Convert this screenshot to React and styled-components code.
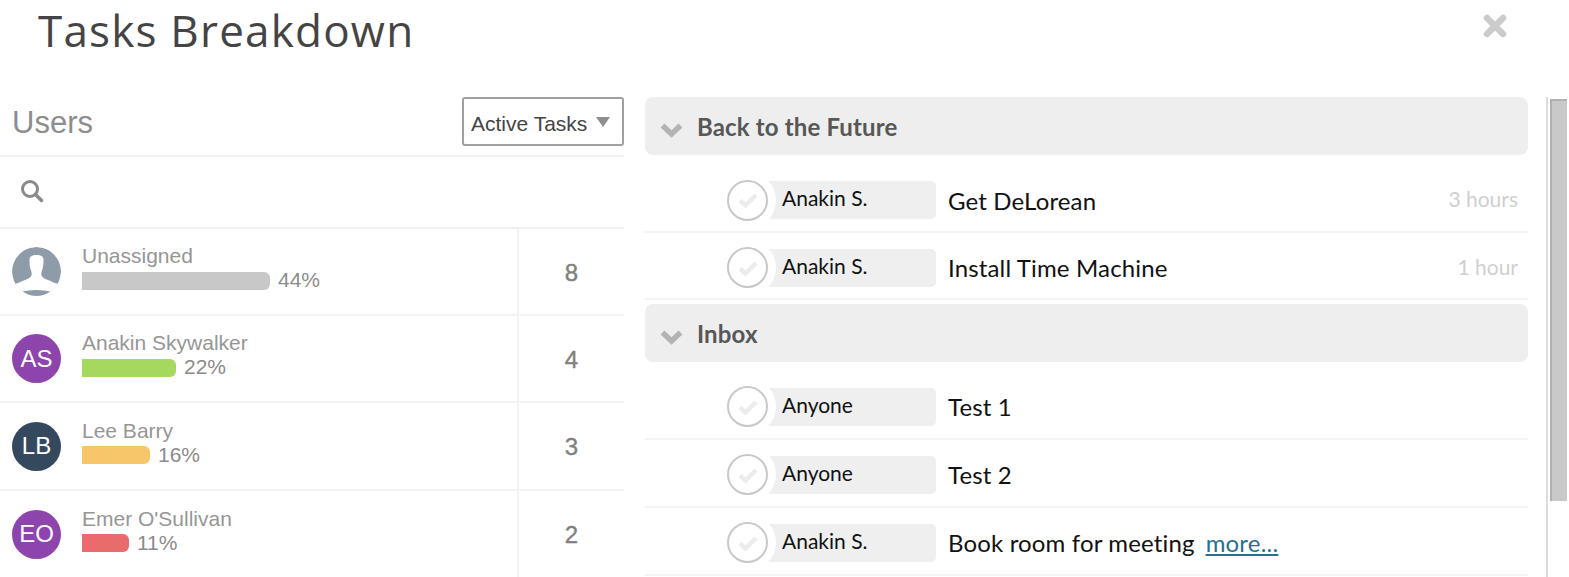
import React from 'react';
import styled, { createGlobalStyle } from 'styled-components';

const GlobalStyle = createGlobalStyle`
  html, body {
    margin: 0;
    padding: 0;
    background: #fff;
    overflow: hidden;
  }
  * { box-sizing: border-box; }
`;

const Page = styled.div`
  width: 1569px;
  height: 577px;
  overflow: hidden;
  display: flex;
  flex-direction: column;
`;

const Header = styled.header`
  height: 97px;
  flex: none;
  display: flex;
  justify-content: space-between;
  align-items: flex-start;
  padding: 0 62px 0 38px;
`;

const Title = styled.h1`
  margin: 0;
  font: 400 44px/60px "Open Sans", sans-serif;
  letter-spacing: 1.2px;
  color: #444;
`;

const Close = styled.svg`
  width: 24px;
  height: 24px;
  margin-top: 14px;
`;

const Body = styled.div`
  flex: 1;
  display: flex;
  min-height: 0;
`;

const Left = styled.section`
  width: 624px;
  flex: none;
`;

const UsersBar = styled.div`
  height: 60px;
  display: flex;
  justify-content: space-between;
  align-items: flex-start;
  padding-left: 12px;
  border-bottom: 2px solid #f1f1f1;
`;

const UsersLabel = styled.h2`
  margin: 0;
  font: 400 31px/52px "Liberation Sans", sans-serif;
  color: #8d8d8d;
`;

const Select = styled.div`
  width: 162px;
  height: 49px;
  border: 2px solid #a0a0a0;
  border-radius: 3px;
  display: flex;
  align-items: center;
  justify-content: space-between;
  padding: 4px 12px 0 7px;
  font: 400 21px "Liberation Sans", sans-serif;
  color: #444;
`;

const Caret = styled.span`
  width: 0;
  height: 0;
  border-left: 7px solid transparent;
  border-right: 7px solid transparent;
  border-top: 10px solid #8f8f8f;
  margin-bottom: 3px;
`;

const SearchRow = styled.div`
  height: 72px;
  display: flex;
  align-items: center;
  padding: 0 0 3px 20px;
  border-bottom: 2px solid #f1f1f1;
`;

const UserRow = styled.div`
  height: ${p => p.$h}px;
  display: flex;
  border-bottom: 2px solid #f3f3f3;
`;

const UserInfo = styled.div`
  width: 519px;
  flex: none;
  display: flex;
  align-items: center;
  gap: 21px;
  padding: 0 0 0 12px;
  border-right: 2px solid #f3f3f3;
`;

const Avatar = styled.div`
  width: 49px;
  height: 49px;
  border-radius: 50%;
  flex: none;
  background: ${p => p.$color};
  color: #fff;
  display: flex;
  align-items: center;
  justify-content: center;
  font: 400 24px "Liberation Sans", sans-serif;
  overflow: hidden;
`;

const UserText = styled.div`
  display: flex;
  flex-direction: column;
  margin-top: -7px;
`;

const UserName = styled.div`
  font: 400 21px/24px "Liberation Sans", sans-serif;
  color: #969696;
`;

const BarLine = styled.div`
  display: flex;
  align-items: center;
  gap: 8px;
  font: 400 21px/24px "Liberation Sans", sans-serif;
  color: #8b8b8b;
`;

const Bar = styled.div`
  height: 18px;
  margin-top: 1px;
  border-radius: 0 6px 6px 0;
  background: ${p => p.$color};
`;

const Count = styled.div`
  flex: 1;
  display: flex;
  align-items: center;
  justify-content: center;
  font: 400 24px "Liberation Sans", sans-serif;
  -webkit-text-stroke: 0.4px #808080;
  color: #808080;
  padding-top: 2px;
`;

const Right = styled.section`
  width: 883px;
  flex: none;
  margin-left: 21px;
`;

const Group = styled.div`
  height: 58px;
  border-radius: 8px;
  background: #eeeeee;
  display: flex;
  align-items: center;
  gap: 14px;
  padding-left: 15px;
  margin-top: ${p => p.$top}px;
  font: 700 24px Lato, sans-serif;
  letter-spacing: 0.15px;
  color: #575757;
`;

const ChevronIcon = styled.svg`
  margin-top: 9px;
`;

const TaskRow = styled.div`
  height: ${p => p.$h}px;
  border-bottom: 2px solid #f3f3f3;
  display: flex;
  align-items: center;
  padding: ${p => p.$pad}px 10px 0 82px;
`;

const Check = styled.div`
  width: 41px;
  height: 41px;
  border-radius: 50%;
  border: 2px solid #c8c8c8;
  background: #fff;
  box-shadow: 0 0 0 8px #fff;
  flex: none;
  display: flex;
  align-items: center;
  justify-content: center;
  position: relative;
  z-index: 1;
`;

const Assignee = styled.div`
  width: 180px;
  height: 38px;
  margin-left: -12px;
  flex: none;
  border-radius: 0 5px 5px 0;
  background: #efefef;
  padding: 0 0 5px 26px;
  display: flex;
  align-items: center;
  font: 400 21px Lato, sans-serif;
  color: #111;
`;

const TaskName = styled.div`
  margin-left: 12px;
  font: 400 24px Lato, sans-serif;
  letter-spacing: 0.15px;
  color: #111;
`;

const More = styled.a`
  margin-left: 11px;
  font: 400 24px Lato, sans-serif;
  letter-spacing: 0.2px;
  color: #2a6f8f;
  text-decoration: underline;
`;

const Estimate = styled.div`
  margin-left: auto;
  padding-bottom: 3px;
  font: 400 21px Lato, sans-serif;
  color: #cfcfcf;
`;

const Scrollbar = styled.div`
  width: 23px;
  flex: none;
  margin-left: 18px;
  display: flex;
  border-left: 2px solid #dcdcdc;
  padding-left: 2px;
`;

const Thumb = styled.div`
  width: 17px;
  height: 402px;
  margin-top: 2px;
  background: #c9c9c9;
  border-top: 2px solid #b0b0b0;
  border-left: 2px solid #b0b0b0;
`;

const users = [
  { name: 'Unassigned', pct: 44, width: 188, color: '#c8c8c8', count: 8, h: 87 },
  { name: 'Anakin Skywalker', initials: 'AS', avatar: '#8e44ad', pct: 22, width: 94, color: '#a6d85f', count: 4, h: 87 },
  { name: 'Lee Barry', initials: 'LB', avatar: '#34495e', pct: 16, width: 68, color: '#f8c66a', count: 3, h: 88 },
  { name: "Emer O'Sullivan", initials: 'EO', avatar: '#8e44ad', pct: 11, width: 47, color: '#ea6b6b', count: 2, h: 88 },
];

const groups = [
  {
    title: 'Back to the Future',
    top: 0,
    tasks: [
      { who: 'Anakin S.', name: 'Get DeLorean', time: '3 hours', h: 78, pad: 14 },
      { who: 'Anakin S.', name: 'Install Time Machine', time: '1 hour', h: 67, pad: 4 },
    ],
  },
  {
    title: 'Inbox',
    top: 4,
    tasks: [
      { who: 'Anyone', name: 'Test 1', h: 78, pad: 13 },
      { who: 'Anyone', name: 'Test 2', h: 68, pad: 3 },
      { who: 'Anakin S.', name: 'Book room for meeting', more: true, h: 68, pad: 3 },
    ],
  },
];

const Silhouette = () => (
  <svg width="49" height="49" viewBox="0 0 49 49">
    <circle cx="24.5" cy="24.5" r="24.5" fill="#8d9ca8" />
    <path
      d="M24.5 8c-4.500 0-7 1.500-7 4.500 0 4 .2 8 1.500 11 1 2.500 1 5-.5 6.500-2 2-7 3.500-10 5-3 1.500-7 2-8 3l6 7.500c5-1.500 12-2.500 18-2.500s13 1 18 2.500l6-7.500c-1-1-5-1.500-8-3-3-1.500-8-3-10-5-1.500-1.500-1.500-4-.5-6.500 1.300-3 1.500-7 1.500-11 0-3-2.500-4.500-7-4.500z"
      fill="#fff"
    />
  </svg>
);

const CheckMark = () => (
  <svg width="22" height="18" viewBox="0 0 22 18">
    <path d="M3 9.500l5.500 5L19 4" fill="none" stroke="#ececec" strokeWidth="4.500" />
  </svg>
);

const Chevron = () => (
  <ChevronIcon width="23" height="15" viewBox="0 0 23 15">
    <path d="M2.500 2.500l9 8.500 9-8.500" fill="none" stroke="#b3b3b3" strokeWidth="5.500" />
  </ChevronIcon>
);

const SearchIcon = () => (
  <svg width="24" height="24" viewBox="0 0 24 24">
    <circle cx="10" cy="10" r="7.500" fill="none" stroke="#8a8a8a" strokeWidth="3" />
    <path d="M15.500 15.500l6 6" stroke="#8a8a8a" strokeWidth="3.500" strokeLinecap="round" />
  </svg>
);

const App = () => (
  <Page>
    <GlobalStyle />
    <Header>
      <Title>Tasks Breakdown</Title>
      <Close viewBox="0 0 24 24">
        <path d="M4 4l16 16M20 4L4 20" stroke="#cbcbcb" strokeWidth="6.500" strokeLinecap="round" />
      </Close>
    </Header>
    <Body>
      <Left>
        <UsersBar>
          <UsersLabel>Users</UsersLabel>
          <Select>
            Active Tasks
            <Caret />
          </Select>
        </UsersBar>
        <SearchRow>
          <SearchIcon />
        </SearchRow>
        {users.map(u => (
          <UserRow key={u.name} $h={u.h}>
            <UserInfo>
              <Avatar $color={u.avatar}>{u.initials || <Silhouette />}</Avatar>
              <UserText>
                <UserName>{u.name}</UserName>
                <BarLine>
                  <Bar $color={u.color} style={{ width: u.width }} />
                  {u.pct}%
                </BarLine>
              </UserText>
            </UserInfo>
            <Count>{u.count}</Count>
          </UserRow>
        ))}
      </Left>
      <Right>
        {groups.map(g => (
          <React.Fragment key={g.title}>
            <Group $top={g.top}>
              <Chevron />
              {g.title}
            </Group>
            {g.tasks.map(t => (
              <TaskRow key={t.name} $h={t.h} $pad={t.pad}>
                <Check>
                  <CheckMark />
                </Check>
                <Assignee>{t.who}</Assignee>
                <TaskName>{t.name}</TaskName>
                {t.more && <More>more...</More>}
                {t.time && <Estimate>{t.time}</Estimate>}
              </TaskRow>
            ))}
          </React.Fragment>
        ))}
      </Right>
      <Scrollbar>
        <Thumb />
      </Scrollbar>
    </Body>
  </Page>
);

export default App;
